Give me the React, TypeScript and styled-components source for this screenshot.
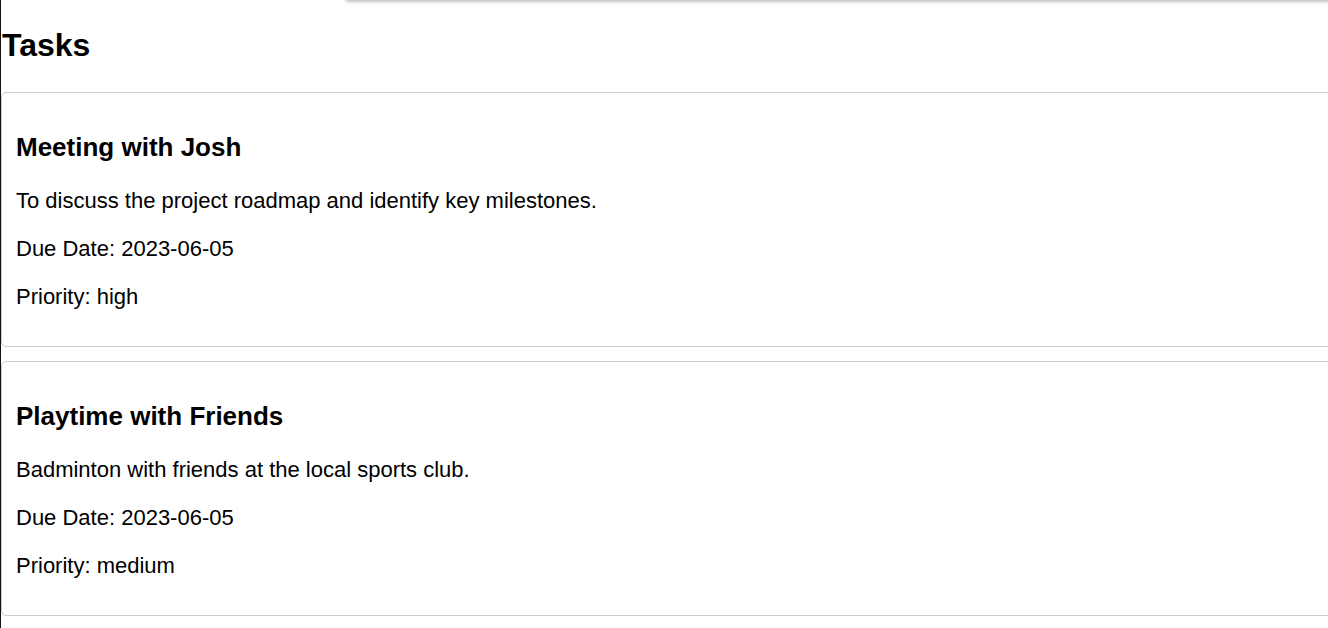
import React from "react";
import styled, { createGlobalStyle } from "styled-components";

const GlobalStyle = createGlobalStyle`
  html, body {
    margin: 0;
    padding: 0;
    overflow: hidden;
    background: #ffffff;
    font-family: "Liberation Sans", Arial, sans-serif;
    color: #000;
  }
`;

const Page = styled.div`
  position: relative;
  min-height: 628px;
  width: 1400px;
  border-left: 1px solid #111;
  padding-top: 8px;
  box-sizing: border-box;
`;

const TopPanel = styled.div`
  position: absolute;
  top: -60px;
  left: 345px;
  width: 1100px;
  height: 60px;
  background: #fff;
  box-shadow: 0 1px 4px rgba(0, 0, 0, 0.35);
`;

const Title = styled.h1`
  font-size: 32px;
  font-weight: 700;
  margin: 19px 0 28px 1px;
  line-height: 37px;
`;

const TaskList = styled.div`
  display: flex;
  flex-direction: column;
  gap: 14px;
`;

const Card = styled.div`
  border: 1px solid #cccccc;
  border-radius: 5px;
  padding: 16px 14px 15px;
`;

const CardTitle = styled.h3`
  font-size: 26px;
  font-weight: 700;
  margin: 24px 0 26px;
  line-height: 28px;
`;

const Line = styled.p`
  font-size: 22px;
  line-height: 28px;
  margin: 20px 0;
`;

const tasks = [
  {
    title: "Meeting with Josh",
    description: "To discuss the project roadmap and identify key milestones.",
    due: "2023-06-05",
    priority: "high",
  },
  {
    title: "Playtime with Friends",
    description: "Badminton with friends at the local sports club.",
    due: "2023-06-05",
    priority: "medium",
  },
];

export default function App() {
  return (
    <>
      <GlobalStyle />
      <Page>
        <TopPanel />
        <Title>Tasks</Title>
        <TaskList>
          {tasks.map((t) => (
            <Card key={t.title}>
              <CardTitle>{t.title}</CardTitle>
              <Line>{t.description}</Line>
              <Line>Due Date: {t.due}</Line>
              <Line>Priority: {t.priority}</Line>
            </Card>
          ))}
        </TaskList>
      </Page>
    </>
  );
}
